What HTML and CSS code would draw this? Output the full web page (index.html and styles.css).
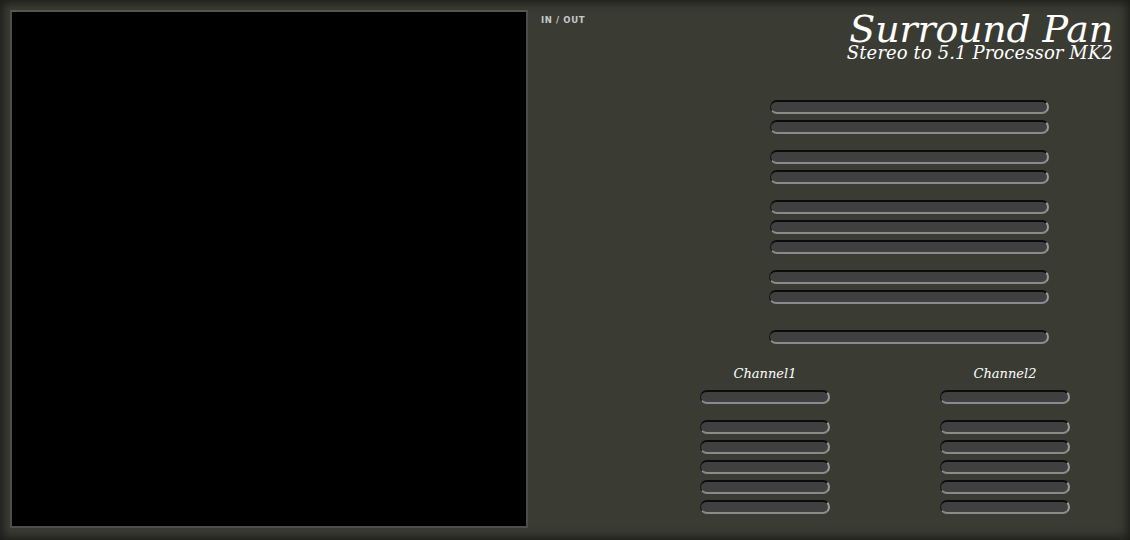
FILE: index.html
```html
<!DOCTYPE html>
<html>
<head>
<meta charset="utf-8">
<link rel="stylesheet" href="styles.css">
</head>
<body>
<div class="frame">
  <div class="display"></div>
  <div class="panel">
    <div class="top">
      <div class="inout">IN / OUT</div>
      <div class="title">
        <div class="name">Surround Pan</div>
        <div class="sub">Stereo to 5.1 Processor MK2</div>
      </div>
    </div>
    <div class="sliders">
      <div class="group"><div class="slider"></div><div class="slider"></div></div>
      <div class="group"><div class="slider"></div><div class="slider"></div></div>
      <div class="group"><div class="slider"></div><div class="slider"></div><div class="slider"></div></div>
      <div class="group shift"><div class="slider"></div><div class="slider"></div></div>
      <div class="group shift last"><div class="slider"></div></div>
    </div>
    <div class="channels">
      <div class="channel">
        <div class="ch-label">Channel1</div>
        <div class="slider small"></div>
        <div class="ch-group">
          <div class="slider small"></div><div class="slider small"></div><div class="slider small"></div><div class="slider small"></div><div class="slider small"></div>
        </div>
      </div>
      <div class="channel">
        <div class="ch-label">Channel2</div>
        <div class="slider small"></div>
        <div class="ch-group">
          <div class="slider small"></div><div class="slider small"></div><div class="slider small"></div><div class="slider small"></div><div class="slider small"></div>
        </div>
      </div>
    </div>
  </div>
</div>
</body>
</html>
```
FILE: styles.css
```css
html, body {
  margin: 0;
  padding: 0;
  width: 1130px;
  height: 540px;
  overflow: hidden;
  background: #3a3c34;
}
.frame {
  width: 1130px;
  height: 540px;
  box-sizing: border-box;
  display: flex;
  background: #3a3c34;
  box-shadow: inset 0 0 10px 3px #1c1c1a;
}
.display {
  margin: 10px 0 0 10px;
  width: 518px;
  height: 518px;
  box-sizing: border-box;
  background: #000;
  border: 2px solid #4c4e4a;
  border-top-color: #55574f;
}
.panel {
  flex: 1;
  display: flex;
  flex-direction: column;
}
.top {
  display: flex;
  justify-content: space-between;
  padding: 0 17px 0 13px;
  height: 100px;
}
.inout {
  font-family: "DejaVu Sans", sans-serif;
  font-weight: bold;
  font-size: 8.5px;
  color: #c8c8c8;
  letter-spacing: 0.6px;
  padding-top: 15px;
}
.title {
  text-align: right;
  color: #fff;
  font-family: "DejaVu Serif", serif;
  font-style: italic;
  padding-top: 14px;
}
.name {
  font-size: 38px;
  line-height: 30px;
  letter-spacing: -0.2px;
}
.sub {
  font-size: 18px;
  line-height: 14px;
  letter-spacing: 0.1px;
  padding-top: 2px;
}
.sliders {
  margin-left: 242px;
  width: 279px;
  display: flex;
  flex-direction: column;
  gap: 16px;
}
.group {
  display: flex;
  flex-direction: column;
  gap: 6px;
}
.group.shift {
  margin-left: -1px;
}
.group.last {
  margin-top: 10px;
}
.slider {
  height: 14px;
  width: 100%;
  box-sizing: border-box;
  border-radius: 7px;
  background: #404040;
  border-top: 2px solid #0c0c0c;
  border-left: 1px solid #151515;
  border-bottom: 2px solid #8a8a8a;
  border-right: 2px solid #9a9a9a;
}
.channels {
  display: flex;
  gap: 110px;
  margin: 22px 0 0 172px;
}
.channel {
  width: 130px;
  display: flex;
  flex-direction: column;
}
.ch-label {
  text-align: center;
  font-family: "DejaVu Serif", serif;
  font-style: italic;
  font-size: 13px;
  color: #fff;
  height: 24px;
  line-height: 15px;
}
.ch-group {
  margin-top: 16px;
  display: flex;
  flex-direction: column;
  gap: 6px;
}
```
